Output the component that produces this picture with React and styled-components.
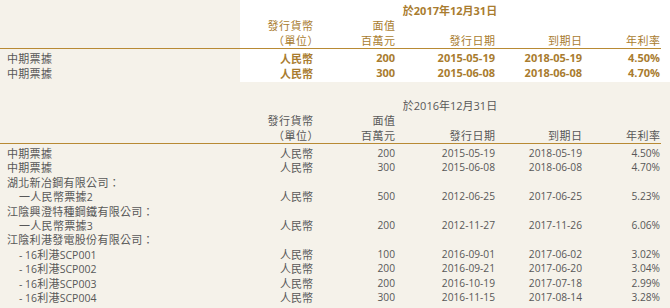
import React from "react";
import styled, { createGlobalStyle } from "styled-components";

const GOLD = "#a97c2f";
const RULE = "#b88a34";
const GREY = "#585858";

const GlobalStyle = createGlobalStyle`
  body {
    margin: 0;
    background: #f5f2ea;
    font-family: "Open Sans", "Noto Sans CJK TC", sans-serif;
    color: ${GREY};
  }
`;

const Page = styled.div`
  width: 670px;
`;

const Section = styled.div`
  display: grid;
  grid-template-columns: 240px 73px 82px 100px 87px 78px;
  padding: ${(p) => (p.$current ? "3px 10px 2px 0" : "16px 10px 0 0")};
  background: ${(p) =>
    p.$current ? "linear-gradient(to right, transparent 240px, #fff 240px)" : "transparent"};
`;

const Caption = styled.div`
  grid-column: 2 / 7;
  text-align: center;
  height: 15px;
  line-height: 15px;
  font-size: 11px;
  font-weight: ${(p) => (p.$current ? 700 : 400)};
  color: ${(p) => (p.$current ? GOLD : GREY)};
  font-family: "Noto Sans CJK TC", sans-serif;

  b {
    font-family: "Open Sans", sans-serif;
    font-weight: inherit;
  }
`;

const HeadCell = styled.div`
  border-bottom: 1px solid ${RULE};
  text-align: right;
  font-family: "Noto Sans CJK TC", sans-serif;
  font-size: 11px;
  line-height: 15px;
  letter-spacing: 0.5px;
  margin-right: -0.5px;
  color: ${(p) => (p.$current ? GOLD : GREY)};
  display: flex;
  flex-direction: column;
  justify-content: flex-end;
`;

const Paren = styled.span`
  font-feature-settings: "halt";
`;

const BodyGap = styled.div`
  grid-column: 1 / -1;
  height: 2px;
`;

const rowHeight = (p) => (p.$current ? "14.5px" : "14.4px");

const Label = styled.div`
  grid-column: ${(p) => (p.$group ? "1 / -1" : "auto")};
  padding-left: ${(p) => (p.$indent ? "19px" : "7px")};
  font-family: "Noto Sans CJK TC", sans-serif;
  font-size: 11px;
  letter-spacing: 0.3px;
  height: ${rowHeight};
  line-height: ${rowHeight};
  white-space: nowrap;
  overflow: visible;

  b {
    font-family: "Open Sans", sans-serif;
    font-weight: 400;
    font-size: 10.5px;
    letter-spacing: 0;
    line-height: 1;
  }
`;

const Currency = styled.div`
  text-align: right;
  font-family: "Noto Sans CJK TC", sans-serif;
  font-size: 11px;
  height: ${rowHeight};
  line-height: ${rowHeight};
  font-weight: ${(p) => (p.$current ? 700 : 400)};
  color: ${(p) => (p.$current ? GOLD : GREY)};
`;

const Num = styled.div`
  text-align: right;
  font-family: "Open Sans", sans-serif;
  font-size: ${(p) => (p.$current ? "11px" : "10.2px")};
  height: ${rowHeight};
  line-height: ${rowHeight};
  font-weight: ${(p) => (p.$current ? 700 : 400)};
  color: ${(p) => (p.$current ? GOLD : GREY)};
`;

const topRows = [
  ["中期票據", "人民幣", "200", "2015-05-19", "2018-05-19", "4.50%"],
  ["中期票據", "人民幣", "300", "2015-06-08", "2018-06-08", "4.70%"],
];

const bottomRows = [
  { label: "中期票據", cells: ["人民幣", "200", "2015-05-19", "2018-05-19", "4.50%"] },
  { label: "中期票據", cells: ["人民幣", "300", "2015-06-08", "2018-06-08", "4.70%"] },
  { label: "湖北新冶鋼有限公司：", group: true },
  { label: "一人民幣票據", tag: "2", indent: true, cells: ["人民幣", "500", "2012-06-25", "2017-06-25", "5.23%"] },
  { label: "江陰興澄特種鋼鐵有限公司：", group: true },
  { label: "一人民幣票據", tag: "3", indent: true, cells: ["人民幣", "200", "2012-11-27", "2017-11-26", "6.06%"] },
  { label: "江陰利港發電股份有限公司：", group: true },
  { pre: "- 16", label: "利港", tag: "SCP001", indent: true, cells: ["人民幣", "100", "2016-09-01", "2017-06-02", "3.02%"] },
  { pre: "- 16", label: "利港", tag: "SCP002", indent: true, cells: ["人民幣", "200", "2016-09-21", "2017-06-20", "3.04%"] },
  { pre: "- 16", label: "利港", tag: "SCP003", indent: true, cells: ["人民幣", "200", "2016-10-19", "2017-07-18", "2.99%"] },
  { pre: "- 16", label: "利港", tag: "SCP004", indent: true, cells: ["人民幣", "300", "2016-11-15", "2017-08-14", "3.28%"] },
];

const Header = ({ current, year }) => (
  <>
    <Caption $current={current}>
      於<b>{year}</b>年<b>12</b>月<b>31</b>日
    </Caption>
    <HeadCell $current={current} />
    <HeadCell $current={current}>
      <span>發行貨幣</span>
      <Paren>（單位）</Paren>
    </HeadCell>
    <HeadCell $current={current}>
      <span>面值</span>
      <span>百萬元</span>
    </HeadCell>
    <HeadCell $current={current}>發行日期</HeadCell>
    <HeadCell $current={current}>到期日</HeadCell>
    <HeadCell $current={current}>年利率</HeadCell>
    <BodyGap />
  </>
);

const App = () => (
  <Page>
    <GlobalStyle />
    <Section $current>
      <Header current year="2017" />
      {topRows.map(([label, cur, ...nums], i) => (
        <React.Fragment key={i}>
          <Label $current>{label}</Label>
          <Currency $current>{cur}</Currency>
          {nums.map((n, j) => (
            <Num $current key={j}>
              {n}
            </Num>
          ))}
        </React.Fragment>
      ))}
    </Section>
    <Section>
      <Header year="2016" />
      {bottomRows.map((row, i) => (
        <React.Fragment key={i}>
          <Label $group={row.group} $indent={row.indent}>
            {row.pre && <b>{row.pre}</b>}
            {row.label}
            {row.tag && <b>{row.tag}</b>}
          </Label>
          {row.cells && (
            <>
              <Currency>{row.cells[0]}</Currency>
              {row.cells.slice(1).map((n, j) => (
                <Num key={j}>{n}</Num>
              ))}
            </>
          )}
        </React.Fragment>
      ))}
    </Section>
  </Page>
);

export default App;
